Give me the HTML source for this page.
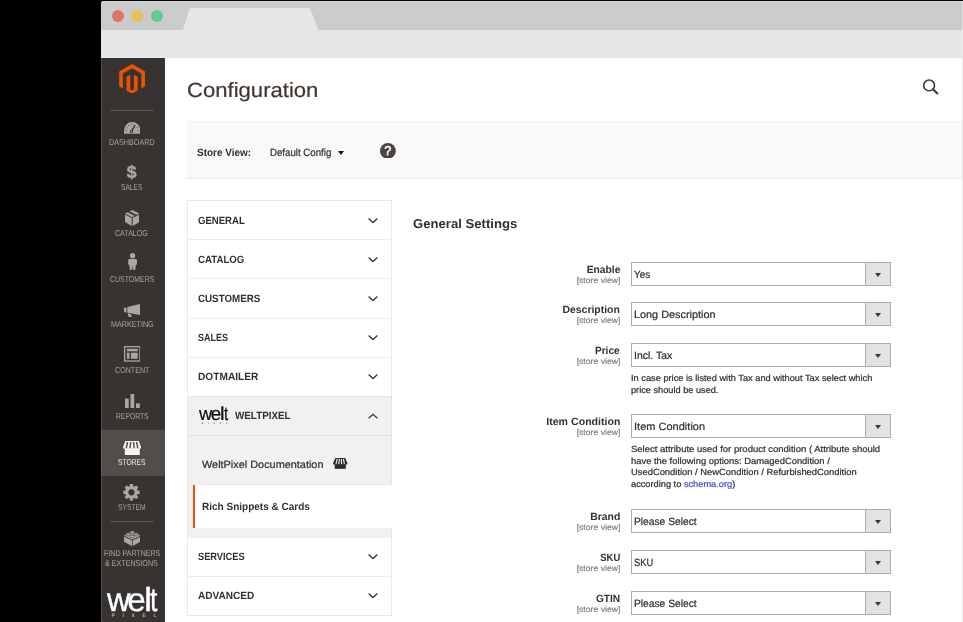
<!DOCTYPE html>
<html>
<head>
<meta charset="utf-8">
<title>Configuration</title>
<style>
*{box-sizing:border-box;margin:0;padding:0}
html,body{width:963px;height:622px;overflow:hidden;background:#000}
body{font-family:"Liberation Sans",sans-serif;text-rendering:geometricPrecision;color:#41362f;position:relative}
#win{position:absolute;left:101px;top:1px;width:862px;height:621px;background:#fff;border-radius:3px 0 0 2.5px;overflow:hidden}
#pg{will-change:transform;position:absolute;left:-101px;top:-1px;width:963px;height:622px}
.a{position:absolute}
.t{position:absolute;white-space:nowrap}
.dot{position:absolute;top:10.2px;width:12px;height:12px;border-radius:50%}
.hr{position:absolute;left:110px;width:44px;height:1px;background:#5b5753}
.ln{position:absolute;left:188px;width:204px;height:1px;background:#ebebeb}
.ch{position:absolute;left:368.2px}
.sel{position:absolute;left:631px;width:260px;height:24px;border:1px solid #adadad;background:#fff}
.sel i{position:absolute;right:0;top:0;width:25px;height:22px;background:#e3e3e3;border-left:1px solid #adadad}
.sel i:after{content:"";position:absolute;left:8.9px;top:9.6px;border-left:3.1px solid transparent;border-right:3.1px solid transparent;border-top:4.2px solid #41362f}
</style>
</head>
<body>
<div id="win"><div id="pg">
<!-- browser chrome -->
<div class="a" style="left:101px;top:1px;width:862px;height:29px;background:#cbcbcb"></div>
<div class="a" style="left:101px;top:30px;width:862px;height:28px;background:#e6e6e6"></div>
<svg class="a" style="left:101px;top:1px" width="862" height="30" viewBox="0 0 862 30"><path d="M81.8 29 L88 9 Q88.6 7 90.5 7 L207 7 Q209 7 209.6 9 L217.6 29 Z" fill="#e6e6e6"/></svg>
<div class="dot" style="left:112px;background:#e0726c"></div>
<div class="dot" style="left:131.3px;background:#e6c454"></div>
<div class="dot" style="left:151px;background:#66c88c"></div>

<div class="a" style="left:101px;top:1px;width:862px;height:1px;background:rgba(255,255,255,0.22)"></div>
<!-- sidebar -->
<div class="a" style="left:101px;top:58px;width:63.5px;height:564px;background:#373330"></div>
<div class="a" style="left:101px;top:430px;width:63.5px;height:45.5px;background:#524d49"></div>
<svg class="a" style="left:119.2px;top:63.6px" width="26.2" height="29.8" viewBox="0 0 26 30"><path fill="#eb5202" d="M13 0 L26 7.5 L26 22.5 L22.3 24.65 L22.3 9.65 L13 4.3 L3.7 9.65 L3.7 24.65 L0 22.5 L0 7.5 Z"/><path fill="#eb5202" d="M7.4 12.85 L11.15 10.7 L11.15 25.7 L13 26.75 L14.85 25.7 L14.85 10.7 L18.6 12.85 L18.6 26.8 L13 30 L7.4 26.8 Z"/></svg>
<div class="hr" style="top:110px"></div>
<div class="hr" style="top:521px"></div>
<!-- dashboard -->
<svg class="a" style="left:123.8px;top:122.2px" width="16.4" height="11.7" viewBox="0 0 17 11.7" preserveAspectRatio="none"><path fill="#aaa6a0" d="M0 11.7 V8.5 A8.5 8.5 0 0 1 17 8.5 V11.7 Z"/><path d="M7.6 9.6 L11.2 3.6" stroke="#373330" stroke-width="1.5" stroke-linecap="round"/><circle cx="7.7" cy="9.4" r="1.5" fill="#373330"/><circle cx="7.7" cy="9.4" r="0.6" fill="#aaa6a0"/><g fill="#373330"><circle cx="2.2" cy="8.6" r=".55"/><circle cx="2.9" cy="5.7" r=".55"/><circle cx="4.9" cy="3.5" r=".55"/><circle cx="8.3" cy="2.4" r=".55"/><circle cx="13.8" cy="5.6" r=".55"/><circle cx="14.6" cy="8.6" r=".55"/></g></svg>
<!-- sales -->
<div class="a" style="left:101px;width:61.5px;top:161.6px;text-align:center;font-weight:bold;font-size:17.6px;line-height:20px;color:#aaa6a0;-webkit-text-stroke:0.45px #aaa6a0">$</div>
<!-- catalog -->
<svg class="a" style="left:124.8px;top:210px" width="14.4" height="15.9" viewBox="0 0 14.4 15.9"><g fill="#aaa6a0"><path d="M7.2 0 L14.4 3.4 L7.2 7.2 L0 3.4 Z"/><path d="M0 4.5 L6.7 8.1 L6.7 15.9 L0 12 Z"/><path d="M14.4 4.5 L7.7 8.1 L7.7 15.9 L14.4 12 Z"/></g><path d="M3.2 1.6 L10.8 5.5" stroke="#373330" stroke-width="1.7"/></svg>
<!-- customers -->
<svg class="a" style="left:127.7px;top:252.8px" width="9.2" height="17.5" viewBox="0 0 9.2 17.5"><g fill="#aaa6a0"><circle cx="4.6" cy="2.7" r="2.6"/><path d="M0.2 7 Q0.2 6 1.2 6 H8 Q9 6 9 7 V11.4 L7.9 12 L7.2 17.5 H5.4 L4.6 13.2 L3.8 17.5 H2 L1.3 12 L0.2 11.4 Z"/></g></svg>
<!-- marketing -->
<svg class="a" style="left:124.1px;top:303.7px" width="16.4" height="13.5" viewBox="0 0 16.4 13.5"><g fill="#aaa6a0"><path d="M0 3.7 H2.5 V8.3 H0 Z"/><path d="M3.3 3.1 L16.4 0 V11.1 L3.3 8.8 Z"/><path d="M3.6 9.4 L6.7 10 L8 13.5 H5 Z"/></g></svg>
<!-- content -->
<svg class="a" style="left:123.8px;top:346.4px" width="16.6" height="15.7" viewBox="0 0 16.6 15.7"><rect x=".65" y=".65" width="15.3" height="14.4" fill="none" stroke="#aaa6a0" stroke-width="1.3"/><g fill="#aaa6a0"><rect x="2.9" y="2.8" width="10.8" height="2.5"/><rect x="2.9" y="6.7" width="2.6" height="6.1"/><rect x="6.9" y="6.7" width="6.8" height="6.1"/></g></svg>
<!-- reports -->
<svg class="a" style="left:124.8px;top:393.7px" width="15" height="14.8" viewBox="0 0 15 14.8"><g fill="#aaa6a0"><rect x="0" y="4.6" width="3.7" height="10.2"/><rect x="5.5" y="0" width="3.7" height="14.8"/><rect x="11" y="9.4" width="3.8" height="5.4"/></g></svg>
<!-- stores -->
<svg class="a" style="left:122.7px;top:440.8px" width="18.2" height="14" viewBox="0 0 18.2 14"><g fill="#f7f3eb"><path d="M2.3 0 H15.9 L18.2 6.6 Q18.2 7.7 17.2 7.7 H1 Q0 7.7 0 6.6 Z"/><rect x="1.8" y="7.5" width="15" height="6.5"/></g><g stroke="#524d49" stroke-width="1.45"><path d="M4.6 1 L3.3 7"/><path d="M7.7 1 L7 7"/><path d="M10.6 1 L11.2 7"/><path d="M13.6 1 L14.8 7"/></g></svg>
<!-- system -->
<svg class="a" style="left:123.3px;top:484.4px" width="16.9" height="16.6" viewBox="0 0 16.9 16.5"><path fill="#aaa6a0" fill-rule="evenodd" d="M6.77 2.18 L6.79 0.07 L10.11 0.07 L10.13 2.18 L11.56 2.77 L13.06 1.29 L15.41 3.64 L13.93 5.14 L14.52 6.57 L16.63 6.59 L16.63 9.91 L14.52 9.93 L13.93 11.36 L15.41 12.86 L13.06 15.21 L11.56 13.73 L10.13 14.32 L10.11 16.43 L6.79 16.43 L6.77 14.32 L5.34 13.73 L3.84 15.21 L1.49 12.86 L2.97 11.36 L2.38 9.93 L0.27 9.91 L0.27 6.59 L2.38 6.57 L2.97 5.14 L1.49 3.64 L3.84 1.29 L5.34 2.77 Z M11.55 8.25 A3.1 3.1 0 1 0 5.35 8.25 A3.1 3.1 0 1 0 11.55 8.25 Z"/></svg>
<!-- extensions -->
<svg class="a" style="left:123.9px;top:529.8px" width="16.6" height="15.9" viewBox="0 0 16.6 15.9"><g fill="#aaa6a0"><path d="M8.3 1.6 L16.6 5.6 L8.3 9.8 L0 5.6 Z"/><path d="M0 6.6 L7.9 10.6 L7.9 15.9 L0 11.8 Z"/><path d="M16.6 6.6 L8.7 10.6 L8.7 15.9 L16.6 11.8 Z"/><ellipse cx="8.3" cy="2" rx="2.3" ry="1.3"/><ellipse cx="4.3" cy="4" rx="2.3" ry="1.3"/><ellipse cx="12.3" cy="4" rx="2.3" ry="1.3"/><ellipse cx="8.3" cy="6" rx="2.3" ry="1.3"/></g><g fill="none" stroke="#373330" stroke-width=".5"><ellipse cx="8.3" cy="2.6" rx="2.3" ry="1.3"/><ellipse cx="4.3" cy="4.6" rx="2.3" ry="1.3"/><ellipse cx="12.3" cy="4.6" rx="2.3" ry="1.3"/><ellipse cx="8.3" cy="6.6" rx="2.3" ry="1.3"/></g></svg>
<!-- PIXEL under big welt -->
<div class="a" style="left:111.6px;top:613.4px;font-size:5px;line-height:6px;letter-spacing:7.6px;font-weight:bold;color:#b3b1ae;white-space:nowrap">PIXEL</div>

<div class="a" style="left:101px;top:1px;width:1px;height:621px;background:rgba(255,255,255,0.13)"></div>
<div class="a" style="left:101px;top:57px;width:64px;height:1px;background:#efefef"></div>

<!-- store view bar -->
<div class="a" style="left:187px;top:121px;width:776px;height:58px;background:#f8f8f8;border-bottom:1px solid #ebebeb;border-top:1px solid #f3f3f3"></div>
<div class="a" style="left:337.9px;top:150.7px;border-left:3.2px solid transparent;border-right:3.2px solid transparent;border-top:4.2px solid #15110e"></div>
<svg class="a" style="left:379.8px;top:142.6px" width="15.8" height="15.8" viewBox="0 0 16 16"><circle cx="8" cy="8" r="8" fill="#4c433d"/><text x="8" y="12.3" text-anchor="middle" font-family="Liberation Sans" font-size="13" fill="#fff" stroke="#fff" stroke-width="0.5">?</text></svg>
<svg class="a" style="left:922px;top:78px" width="17" height="17" viewBox="0 0 17 17"><circle cx="7.1" cy="7.4" r="5.4" fill="none" stroke="#41362f" stroke-width="1.6"/><path d="M11 11.3 L15.4 15.5" stroke="#41362f" stroke-width="2" stroke-linecap="round"/></svg>
<div class="a" style="left:962px;top:58px;width:1px;height:564px;background:#ececec"></div>
<div class="a" style="left:962px;top:1px;width:1px;height:57px;background:rgba(255,255,255,0.3)"></div>

<!-- nav panel -->
<div class="a" style="left:187px;top:200px;width:205px;height:416px;border:1px solid #e9e9e9;background:#fff"></div>
<div class="ln" style="top:239px"></div>
<div class="ln" style="top:278px"></div>
<div class="ln" style="top:318px"></div>
<div class="ln" style="top:357px"></div>
<div class="a" style="left:188px;top:396px;width:203px;height:141.5px;background:#f1f1f1"></div>
<div class="ln" style="top:396px;background:#e6e6e6"></div>
<div class="ln" style="top:435px;background:#e3e3e3"></div>
<div class="ln" style="top:576px"></div>
<div class="a" style="left:391px;top:396px;width:1px;height:89px;background:#e4e4e4"></div>
<div class="a" style="left:391px;top:527px;width:1px;height:10px;background:#e4e4e4"></div>
<div class="a" style="left:188px;top:484px;width:204px;height:1px;background:#e6e6e6"></div>
<div class="a" style="left:188px;top:527px;width:204px;height:1px;background:#e8e8e8"></div>
<div class="a" style="left:192.7px;top:485px;width:200.7px;height:42.5px;background:#fff;border-left:2.3px solid #eb5202"></div>
<!-- PIXEL under small welt -->
<div class="a" style="left:201.8px;top:421.6px;font-size:2.6px;line-height:4px;letter-spacing:4.55px;font-weight:bold;color:#777;white-space:nowrap">PIXEL</div>
<!-- doc store icon -->
<svg class="a" style="left:333.1px;top:458px" width="14.5" height="10.8" viewBox="0 0 14.5 10.8"><g fill="#2b2722"><path d="M2.3 0 H12.2 L14.5 5.4 Q14.5 6.6 13.6 6.6 H0.9 Q0 6.6 0 5.4 Z"/><rect x="1.7" y="6.2" width="11.1" height="4.6"/></g><g stroke="#f1f1f1" stroke-width="1.15" stroke-linecap="butt"><path d="M4.1 .9 L3.0 6"/><path d="M6.35 .9 L5.9 6"/><path d="M8.4 .9 L8.6 6"/><path d="M10.5 .9 L11.3 6"/></g></svg>
<!-- chevrons -->
<svg class="ch" style="top:217.65px" width="10" height="6" viewBox="0 0 10 6"><path d="M0.6 0.6 L5 4.5 L9.4 0.6" fill="none" stroke="#41362f" stroke-width="1.35"/></svg>
<svg class="ch" style="top:256.8px" width="10" height="6" viewBox="0 0 10 6"><path d="M0.6 0.6 L5 4.5 L9.4 0.6" fill="none" stroke="#41362f" stroke-width="1.35"/></svg>
<svg class="ch" style="top:295.95px" width="10" height="6" viewBox="0 0 10 6"><path d="M0.6 0.6 L5 4.5 L9.4 0.6" fill="none" stroke="#41362f" stroke-width="1.35"/></svg>
<svg class="ch" style="top:335.05px" width="10" height="6" viewBox="0 0 10 6"><path d="M0.6 0.6 L5 4.5 L9.4 0.6" fill="none" stroke="#41362f" stroke-width="1.35"/></svg>
<svg class="ch" style="top:374.2px" width="10" height="6" viewBox="0 0 10 6"><path d="M0.6 0.6 L5 4.5 L9.4 0.6" fill="none" stroke="#41362f" stroke-width="1.35"/></svg>
<svg class="ch" style="top:412.7px" width="10" height="6" viewBox="0 0 10 6"><path d="M0.6 5.2 L5 1.3 L9.4 5.2" fill="none" stroke="#41362f" stroke-width="1.35"/></svg>
<svg class="ch" style="top:554.4px" width="10" height="6" viewBox="0 0 10 6"><path d="M0.6 0.6 L5 4.5 L9.4 0.6" fill="none" stroke="#41362f" stroke-width="1.35"/></svg>
<svg class="ch" style="top:593.4px" width="10" height="6" viewBox="0 0 10 6"><path d="M0.6 0.6 L5 4.5 L9.4 0.6" fill="none" stroke="#41362f" stroke-width="1.35"/></svg>
<!-- selects -->
<div class="sel" style="top:262px"><i></i></div>
<div class="sel" style="top:302px"><i></i></div>
<div class="sel" style="top:343px"><i></i></div>
<div class="sel" style="top:414px"><i></i></div>
<div class="sel" style="top:509px"><i></i></div>
<div class="sel" style="top:550px"><i></i></div>
<div class="sel" style="top:591px"><i></i></div>

<div class="t" id="title" style="top:78.90px;font-size:20.6px;line-height:24.72px;color:#41362f;-webkit-text-stroke:0.22px #41362f;left:186.62px;transform-origin:0 82%;transform:scale(1.0726,1);">Configuration</div>
<div class="t" id="sv_l" style="top:146.96px;font-size:10.5px;line-height:12.6px;color:#303030;font-weight:bold;left:197.20px;transform-origin:0 82%;transform:scale(0.9473,1);">Store View:</div>
<div class="t" id="sv_v" style="top:146.96px;font-size:10.5px;line-height:12.6px;color:#303030;-webkit-text-stroke:0.22px #303030;left:269.81px;transform-origin:0 82%;transform:scale(0.9207,1);">Default Config</div>
<div class="t" id="gs" style="top:216.39px;font-size:12.9px;line-height:15.48px;color:#303030;font-weight:bold;left:413.47px;transform-origin:0 82%;transform:scale(1.0178,1);">General Settings</div>
<div class="t" id="n0" style="top:214.76px;font-size:10.5px;line-height:12.6px;color:#303030;font-weight:bold;left:198.32px;transform-origin:0 82%;transform:scale(0.9107,1);">GENERAL</div>
<div class="t" id="n1" style="top:253.96px;font-size:10.5px;line-height:12.6px;color:#303030;font-weight:bold;left:198.31px;transform-origin:0 82%;transform:scale(0.9208,1);">CATALOG</div>
<div class="t" id="n2" style="top:293.06px;font-size:10.5px;line-height:12.6px;color:#303030;font-weight:bold;left:198.31px;transform-origin:0 82%;transform:scale(0.9308,1);">CUSTOMERS</div>
<div class="t" id="n3" style="top:332.16px;font-size:10.5px;line-height:12.6px;color:#303030;font-weight:bold;left:198.34px;transform-origin:0 82%;transform:scale(0.8541,1);">SALES</div>
<div class="t" id="n4" style="top:371.26px;font-size:10.5px;line-height:12.6px;color:#303030;font-weight:bold;left:198.29px;transform-origin:0 82%;transform:scale(0.9678,1);">DOTMAILER</div>
<div class="t" id="n5" style="top:409.96px;font-size:10.5px;line-height:12.6px;color:#303030;font-weight:bold;left:235.31px;transform-origin:0 82%;transform:scale(0.9372,1);">WELTPIXEL</div>
<div class="t" id="n6" style="top:550.86px;font-size:10.5px;line-height:12.6px;color:#303030;font-weight:bold;left:198.33px;transform-origin:0 82%;transform:scale(0.8812,1);">SERVICES</div>
<div class="t" id="n7" style="top:589.96px;font-size:10.5px;line-height:12.6px;color:#303030;font-weight:bold;left:198.30px;transform-origin:0 82%;transform:scale(0.9587,1);">ADVANCED</div>
<div class="t" id="doc" style="top:458.96px;font-size:10.5px;line-height:12.6px;color:#303030;-webkit-text-stroke:0.22px #303030;left:202.16px;transform-origin:0 82%;transform:scale(1.0372,1);">WeltPixel Documentation</div>
<div class="t" id="rsc" style="top:500.96px;font-size:10.5px;line-height:12.6px;color:#303030;font-weight:bold;left:202.20px;transform-origin:0 82%;transform:scale(0.9532,1);">Rich Snippets &amp; Cards</div>
<div class="t" id="fl0" style="top:263.86px;font-size:10.5px;line-height:12.6px;color:#303030;font-weight:bold;right:342.99px;transform-origin:100% 82%;transform:scale(0.9793,1);">Enable</div>
<div class="t" id="fs0" style="top:276.24px;font-size:8.2px;line-height:9.84px;color:#858585;-webkit-text-stroke:0.22px #858585;right:343.05px;transform-origin:100% 82%;transform:scale(1.0573,1);">[store view]</div>
<div class="t" id="fv0" style="top:268.76px;font-size:10.5px;line-height:12.6px;color:#303030;-webkit-text-stroke:0.22px #303030;left:634.30px;transform-origin:0 82%;transform:scale(0.9447,1);">Yes</div>
<div class="t" id="fl1" style="top:303.86px;font-size:10.5px;line-height:12.6px;color:#303030;font-weight:bold;right:342.98px;transform-origin:100% 82%;transform:scale(0.9908,1);">Description</div>
<div class="t" id="fs1" style="top:316.24px;font-size:8.2px;line-height:9.84px;color:#858585;-webkit-text-stroke:0.22px #858585;right:343.05px;transform-origin:100% 82%;transform:scale(1.0573,1);">[store view]</div>
<div class="t" id="fv1" style="top:308.76px;font-size:10.5px;line-height:12.6px;color:#303030;-webkit-text-stroke:0.22px #303030;left:634.27px;transform-origin:0 82%;transform:scale(1.0340,1);">Long Description</div>
<div class="t" id="fl2" style="top:344.86px;font-size:10.5px;line-height:12.6px;color:#303030;font-weight:bold;right:342.99px;transform-origin:100% 82%;transform:scale(0.9659,1);">Price</div>
<div class="t" id="fs2" style="top:357.24px;font-size:8.2px;line-height:9.84px;color:#858585;-webkit-text-stroke:0.22px #858585;right:343.05px;transform-origin:100% 82%;transform:scale(1.0573,1);">[store view]</div>
<div class="t" id="fv2" style="top:349.76px;font-size:10.5px;line-height:12.6px;color:#303030;-webkit-text-stroke:0.22px #303030;left:634.28px;transform-origin:0 82%;transform:scale(0.9978,1);">Incl. Tax</div>
<div class="t" id="fl3" style="top:415.86px;font-size:10.5px;line-height:12.6px;color:#303030;font-weight:bold;right:342.98px;transform-origin:100% 82%;transform:scale(1.0103,1);">Item Condition</div>
<div class="t" id="fs3" style="top:428.24px;font-size:8.2px;line-height:9.84px;color:#858585;-webkit-text-stroke:0.22px #858585;right:343.05px;transform-origin:100% 82%;transform:scale(1.0573,1);">[store view]</div>
<div class="t" id="fv3" style="top:420.76px;font-size:10.5px;line-height:12.6px;color:#303030;-webkit-text-stroke:0.22px #303030;left:634.26px;transform-origin:0 82%;transform:scale(1.0501,1);">Item Condition</div>
<div class="t" id="fl4" style="top:510.86px;font-size:10.5px;line-height:12.6px;color:#303030;font-weight:bold;right:342.98px;transform-origin:100% 82%;transform:scale(0.9932,1);">Brand</div>
<div class="t" id="fs4" style="top:523.24px;font-size:8.2px;line-height:9.84px;color:#858585;-webkit-text-stroke:0.22px #858585;right:343.05px;transform-origin:100% 82%;transform:scale(1.0573,1);">[store view]</div>
<div class="t" id="fv4" style="top:515.76px;font-size:10.5px;line-height:12.6px;color:#303030;-webkit-text-stroke:0.22px #303030;left:634.29px;transform-origin:0 82%;transform:scale(0.9751,1);">Please Select</div>
<div class="t" id="fl5" style="top:551.86px;font-size:10.5px;line-height:12.6px;color:#303030;font-weight:bold;right:343.02px;transform-origin:100% 82%;transform:scale(0.8951,1);">SKU</div>
<div class="t" id="fs5" style="top:564.24px;font-size:8.2px;line-height:9.84px;color:#858585;-webkit-text-stroke:0.22px #858585;right:343.05px;transform-origin:100% 82%;transform:scale(1.0573,1);">[store view]</div>
<div class="t" id="fv5" style="top:556.76px;font-size:10.5px;line-height:12.6px;color:#303030;-webkit-text-stroke:0.22px #303030;left:634.33px;transform-origin:0 82%;transform:scale(0.8863,1);">SKU</div>
<div class="t" id="fl6" style="top:592.86px;font-size:10.5px;line-height:12.6px;color:#303030;font-weight:bold;right:342.99px;transform-origin:100% 82%;transform:scale(0.9649,1);">GTIN</div>
<div class="t" id="fs6" style="top:605.24px;font-size:8.2px;line-height:9.84px;color:#858585;-webkit-text-stroke:0.22px #858585;right:343.05px;transform-origin:100% 82%;transform:scale(1.0573,1);">[store view]</div>
<div class="t" id="fv6" style="top:597.76px;font-size:10.5px;line-height:12.6px;color:#303030;-webkit-text-stroke:0.22px #303030;left:634.29px;transform-origin:0 82%;transform:scale(0.9751,1);">Please Select</div>
<div class="t" id="na1" style="top:372.78px;font-size:8.9px;line-height:10.68px;color:#303030;-webkit-text-stroke:0.22px #303030;left:630.83px;transform-origin:0 82%;transform:scale(1.0423,1);">In case price is listed with Tax and without Tax select which</div>
<div class="t" id="na2" style="top:384.58px;font-size:8.9px;line-height:10.68px;color:#303030;-webkit-text-stroke:0.22px #303030;left:630.83px;transform-origin:0 82%;transform:scale(1.0362,1);">price should be used.</div>
<div class="t" id="nb1" style="top:444.28px;font-size:8.9px;line-height:10.68px;color:#303030;-webkit-text-stroke:0.22px #303030;left:630.82px;transform-origin:0 82%;transform:scale(1.0699,1);">Select attribute used for product condition ( Attribute should</div>
<div class="t" id="nb2" style="top:455.78px;font-size:8.9px;line-height:10.68px;color:#303030;-webkit-text-stroke:0.22px #303030;left:630.82px;transform-origin:0 82%;transform:scale(1.0573,1);">have the following options: DamagedCondition /</div>
<div class="t" id="nb3" style="top:467.28px;font-size:8.9px;line-height:10.68px;color:#303030;-webkit-text-stroke:0.22px #303030;left:630.82px;transform-origin:0 82%;transform:scale(1.0563,1);">UsedCondition / NewCondition / RefurbishedCondition</div>
<div class="t" id="nb4" style="top:478.68px;font-size:8.9px;line-height:10.68px;color:#303030;-webkit-text-stroke:0.22px #303030;left:630.83px;transform-origin:0 82%;transform:scale(1.0405,1);">according to <span style="color:#3f4ddc;-webkit-text-stroke-color:#3f4ddc">schema.org</span>)</div>
<div class="t" id="s0" style="top:136.65px;font-size:8.5px;line-height:10.2px;color:#aaa6a0;left:108.81px;transform-origin:0 82%;transform:scale(0.8478,1);">DASHBOARD</div>
<div class="t" id="s1" style="top:182.35px;font-size:8.5px;line-height:10.2px;color:#aaa6a0;left:121.04px;transform-origin:0 82%;transform:scale(0.7770,1);">SALES</div>
<div class="t" id="s2" style="top:228.05px;font-size:8.5px;line-height:10.2px;color:#aaa6a0;left:115.22px;transform-origin:0 82%;transform:scale(0.8343,1);">CATALOG</div>
<div class="t" id="s3" style="top:273.85px;font-size:8.5px;line-height:10.2px;color:#aaa6a0;left:109.72px;transform-origin:0 82%;transform:scale(0.8185,1);">CUSTOMERS</div>
<div class="t" id="s4" style="top:319.35px;font-size:8.5px;line-height:10.2px;color:#aaa6a0;left:110.61px;transform-origin:0 82%;transform:scale(0.8439,1);">MARKETING</div>
<div class="t" id="s5" style="top:365.35px;font-size:8.5px;line-height:10.2px;color:#aaa6a0;left:114.52px;transform-origin:0 82%;transform:scale(0.8381,1);">CONTENT</div>
<div class="t" id="s6" style="top:410.95px;font-size:8.5px;line-height:10.2px;color:#aaa6a0;left:115.53px;transform-origin:0 82%;transform:scale(0.7966,1);">REPORTS</div>
<div class="t" id="s7" style="top:456.55px;font-size:8.5px;line-height:10.2px;color:#f7f3eb;left:117.83px;transform-origin:0 82%;transform:scale(0.7904,1);">STORES</div>
<div class="t" id="s8" style="top:502.25px;font-size:8.5px;line-height:10.2px;color:#aaa6a0;left:117.63px;transform-origin:0 82%;transform:scale(0.7897,1);">SYSTEM</div>
<div class="t" id="s9" style="top:548.35px;font-size:8.5px;line-height:10.2px;color:#aaa6a0;left:103.62px;transform-origin:0 82%;transform:scale(0.8321,1);">FIND PARTNERS</div>
<div class="t" id="s10" style="top:557.75px;font-size:8.5px;line-height:10.2px;color:#aaa6a0;left:105.01px;transform-origin:0 82%;transform:scale(0.8411,1);">&amp; EXTENSIONS</div>
<div class="t" id="waw" style="top:580.88px;font-size:33.2px;line-height:39.84px;color:#fff;-webkit-text-stroke:0.35px #fff;left:106.50px;transform-origin:0 82%;transform:scale(0.9750,1);">w</div>
<div class="t" id="wae" style="top:580.88px;font-size:33.2px;line-height:39.84px;color:#fff;-webkit-text-stroke:0.35px #fff;left:127.31px;transform-origin:0 82%;transform:scale(1.0000,1);">e</div>
<div class="t" id="wal" style="top:580.88px;font-size:33.2px;line-height:39.84px;color:#fff;-webkit-text-stroke:0.35px #fff;left:143.55px;transform-origin:0 82%;transform:scale(1.1000,1);">l</div>
<div class="t" id="wat" style="top:580.88px;font-size:33.2px;line-height:39.84px;color:#fff;-webkit-text-stroke:0.35px #fff;left:149.90px;transform-origin:0 82%;transform:scale(0.8000,1);">t</div>
<div class="t" id="wbw" style="top:403.39px;font-size:18.82px;line-height:22.58px;color:#0d0d0d;-webkit-text-stroke:0.19844999999999996px #0d0d0d;left:199.00px;transform-origin:0 82%;transform:scale(0.9750,1);">w</div>
<div class="t" id="wbe" style="top:403.39px;font-size:18.82px;line-height:22.58px;color:#0d0d0d;-webkit-text-stroke:0.19844999999999996px #0d0d0d;left:210.80px;transform-origin:0 82%;transform:scale(1.0000,1);">e</div>
<div class="t" id="wbl" style="top:403.39px;font-size:18.82px;line-height:22.58px;color:#0d0d0d;-webkit-text-stroke:0.19844999999999996px #0d0d0d;left:220.01px;transform-origin:0 82%;transform:scale(1.1000,1);">l</div>
<div class="t" id="wbt" style="top:403.39px;font-size:18.82px;line-height:22.58px;color:#0d0d0d;-webkit-text-stroke:0.19844999999999996px #0d0d0d;left:223.61px;transform-origin:0 82%;transform:scale(0.8000,1);">t</div>
</div></div>
</body>
</html>
